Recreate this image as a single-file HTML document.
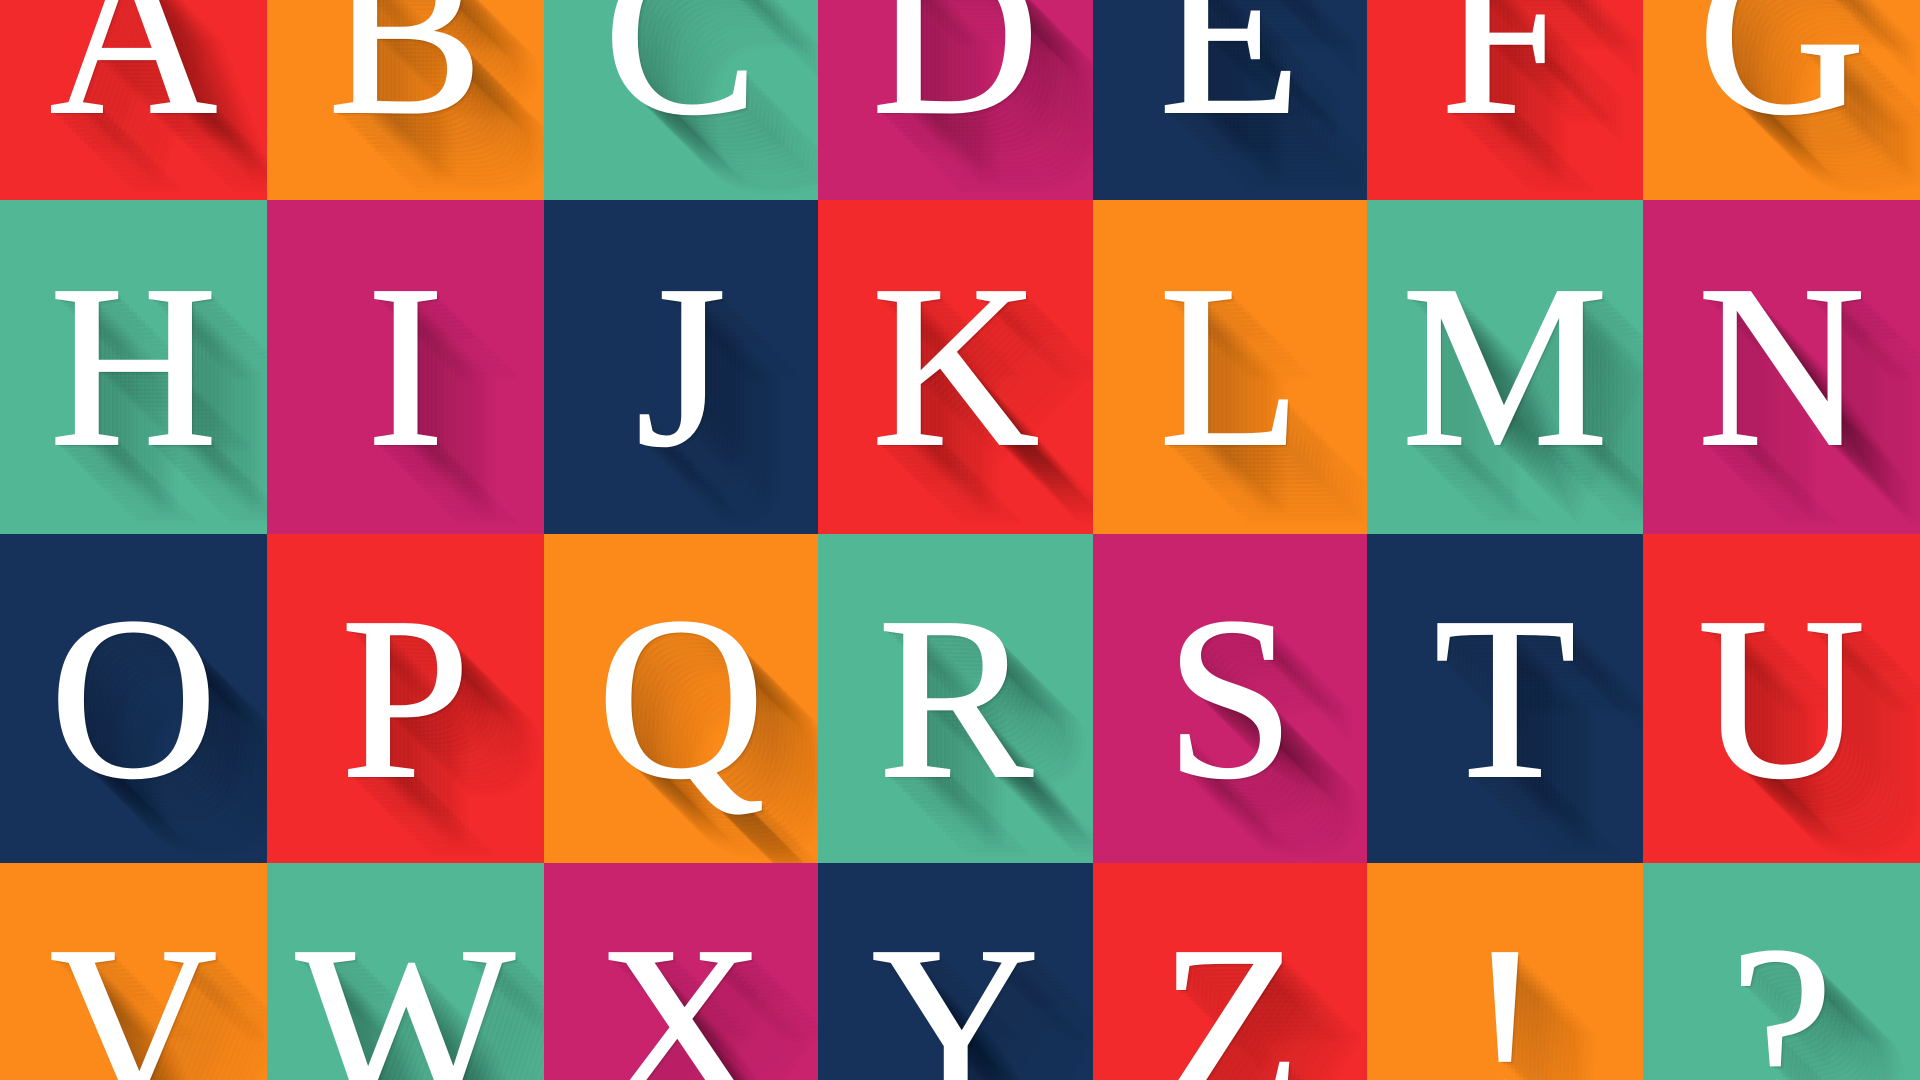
<!DOCTYPE html>
<html><head><meta charset="utf-8"><style>
html,body{margin:0;padding:0;width:1920px;height:1080px;overflow:hidden;background:#17325a}
#w{position:relative;width:1920px;height:1080px;overflow:hidden}
.c{position:absolute;display:flex;align-items:center;justify-content:center;overflow:hidden;
font-family:"Liberation Serif","DejaVu Serif",serif;font-size:232px;line-height:1;color:#fff;}
.c span{display:block;margin-top:0px;-webkit-text-stroke:2px #fff;text-shadow:2px 2px 0 rgba(0,0,0,.12),
4px 4px 0 rgba(0,0,0,.06),8px 8px 0 rgba(0,0,0,.035),12px 12px 0 rgba(0,0,0,.035),16px 16px 0 rgba(0,0,0,.035),20px 20px 0 rgba(0,0,0,.035),24px 24px 0 rgba(0,0,0,.035),28px 28px 0 rgba(0,0,0,.035),32px 32px 0 rgba(0,0,0,.03),36px 36px 0 rgba(0,0,0,.03),40px 40px 0 rgba(0,0,0,.03),44px 44px 0 rgba(0,0,0,.025),48px 48px 0 rgba(0,0,0,.025),52px 52px 0 rgba(0,0,0,.02),56px 56px 0 rgba(0,0,0,.02),60px 60px 0 rgba(0,0,0,.02),64px 64px 0 rgba(0,0,0,.015),68px 68px 0 rgba(0,0,0,.015),72px 72px 0 rgba(0,0,0,.01),76px 76px 0 rgba(0,0,0,.01),80px 80px 0 rgba(0,0,0,.01)}
.r{background:#f22a2b}.o{background:#fc8a1a}.t{background:#52b795}.m{background:#c9236e}.n{background:#17325a}
.c0{left:0;width:267px}.c1{left:267px;width:277px}.c2{left:544px;width:274px}.c3{left:818px;width:275px}.c4{left:1093px;width:274px}.c5{left:1367px;width:276px}.c6{left:1643px;width:277px}
.r0{top:0;height:200px;align-items:flex-end}.r0 span{line-height:60px;margin-bottom:135px}
.r1{top:200px;height:334px}.r2{top:534px;height:329px}
.r3{top:863px;height:217px;align-items:flex-start}.r3 span{line-height:60px;margin-top:135px}
</style></head><body><div id="w">
<div class="c r r0 c0"><span>A</span></div>
<div class="c o r0 c1"><span>B</span></div>
<div class="c t r0 c2"><span>C</span></div>
<div class="c m r0 c3"><span>D</span></div>
<div class="c n r0 c4"><span>E</span></div>
<div class="c r r0 c5"><span>F</span></div>
<div class="c o r0 c6"><span>G</span></div>

<div class="c t r1 c0"><span>H</span></div>
<div class="c m r1 c1"><span>I</span></div>
<div class="c n r1 c2"><span>J</span></div>
<div class="c r r1 c3"><span>K</span></div>
<div class="c o r1 c4"><span>L</span></div>
<div class="c t r1 c5"><span>M</span></div>
<div class="c m r1 c6"><span>N</span></div>

<div class="c n r2 c0"><span>O</span></div>
<div class="c r r2 c1"><span>P</span></div>
<div class="c o r2 c2"><span>Q</span></div>
<div class="c t r2 c3"><span>R</span></div>
<div class="c m r2 c4"><span>S</span></div>
<div class="c n r2 c5"><span>T</span></div>
<div class="c r r2 c6"><span>U</span></div>

<div class="c o r3 c0"><span>V</span></div>
<div class="c t r3 c1"><span>W</span></div>
<div class="c m r3 c2"><span>X</span></div>
<div class="c n r3 c3"><span>Y</span></div>
<div class="c r r3 c4"><span>Z</span></div>
<div class="c o r3 c5"><span>!</span></div>
<div class="c t r3 c6"><span>?</span></div>
</div></body></html>
